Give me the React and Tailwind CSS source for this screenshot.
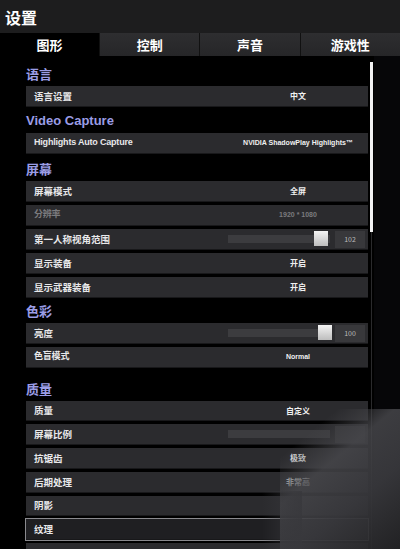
const FONT = { fontFamily: '"Noto Sans CJK SC", "Liberation Sans", sans-serif' };
const LATIN = { fontFamily: '"Liberation Sans", "Noto Sans CJK SC", sans-serif' };

const tabs = ["图形", "控制", "声音", "游戏性"];

function Heading({ children, className = "", latin }) {
  return (
    <div
      className={`flex items-end text-[13px] font-bold text-[#9b9de6] ${className}`}
      style={latin ? LATIN : undefined}
    >
      {children}
    </div>
  );
}

function Row({ label, value, dim, slider, active, latin, h = "h-[21px]" }) {
  return (
    <div
      className={`flex ${h} items-center border-b border-[#18181a] ${
        active ? "bg-[#1f1f22] outline outline-1 outline-[#8a8a8e]" : "bg-[#2b2b2e]"
      }`}
    >
      <div
        className={`w-[202px] pl-[8px] font-bold ${latin ? "text-[9px] tracking-[-0.2px]" : "text-[9.5px]"} ${
          dim ? "text-[#7b7b7e]" : "text-[#e8e8ea]"
        }`}
        style={latin ? LATIN : undefined}
      >
        {label}
      </div>
      {slider ? (
        <div className="flex flex-1 items-center pr-[3px]">
          <div className="relative h-[8px] flex-1 bg-[#3c3c3f]">
            <div
              className="absolute top-[-4px] h-[15px] w-[14px] bg-gradient-to-b from-[#f4f4f4] to-[#bdbdbd]"
              style={{ left: slider.pos }}
            />
          </div>
          <div className="ml-[5px] flex h-[17px] w-[30px] items-center justify-center bg-[#38383b] text-[7px] text-[#bbb]">
            {slider.value}
          </div>
        </div>
      ) : (
        <div
          className={`flex-1 text-center font-bold ${latin ? "text-[7px]" : "text-[8px]"} ${
            dim ? "text-[#7b7b7e]" : "text-[#f0f0f0]"
          }`}
          style={latin ? LATIN : undefined}
        >
          {value}
        </div>
      )}
    </div>
  );
}

export default function App() {
  return (
    <div className="relative h-[549px] w-[400px] overflow-hidden bg-black" style={FONT}>
      {/* header */}
      <div className="flex h-[33px] items-center bg-[#1d1d1e] pl-[5px] text-[16px] font-bold text-white">
        设置
      </div>

      {/* tabs */}
      <div className="flex h-[23px] bg-[#1d1d1e]">
        {tabs.map((t, i) => (
          <div
            key={t}
            className={`flex items-center justify-center text-[13px] font-bold text-white ${
              i === 0
                ? "w-[99px] bg-black"
                : "flex-1 border-l border-[#111] bg-gradient-to-b from-[#2e2e30] to-[#262628]"
            }`}
          >
            {t}
          </div>
        ))}
      </div>

      {/* content */}
      <div className="flex">
        <div className="w-[26px]" />
        <div className="flex w-[342px] flex-col gap-[3px]">
          <Heading className="h-[27px]">语言</Heading>
          <Row label="语言设置" value="中文" />
          <Heading className="h-[20px] text-[12px]" latin>Video Capture</Heading>
          <Row label="Highlights Auto Capture" value="NVIDIA ShadowPlay Highlights™" latin />
          <Heading className="h-[21px]">屏幕</Heading>
          <Row label="屏幕模式" value="全屏" />
          <Row label="分辨率" value="1920 * 1080" dim latin />
          <Row label="第一人称视角范围" slider={{ pos: 86, value: "102" }} />
          <Row label="显示装备" value="开启" />
          <Row label="显示武器装备" value="开启" />
          <Heading className="h-[19px]">色彩</Heading>
          <Row label="亮度" slider={{ pos: 90, value: "100" }} />
          <Row label="色盲模式" value="Normal" latin />
          <Heading className="h-[27px]">质量</Heading>
          <Row label="质量" value="自定义" h="h-[20px]" />
          <Row label="屏幕比例" slider={{ pos: 200, value: "" }} h="h-[21px]" />
          <Row label="抗锯齿" value="极致" h="h-[21px]" />
          <Row label="后期处理" value="非常高" h="h-[21px]" />
          <Row label="阴影" value="" h="h-[20px]" />
          <Row label="纹理" value="" active h="h-[21px]" />
          <Row label="" value="" h="h-[21px]" />
        </div>
        <div className="ml-[2px] flex w-[4px] flex-col pt-[6px]">
          <div className="h-[170px] w-[3px] bg-[#f2f2f2]" />
          <div className="ml-[1px] h-[400px] w-[1px] bg-[#2a2a2c]" />
        </div>
        <div className="flex-1 bg-[#060608]" />
      </div>

      {/* smear over the bottom right corner */}
      <div
        className="pointer-events-none absolute right-0 bottom-0 h-[140px] w-[120px]"
        style={{
          background:
            "linear-gradient(140deg, rgba(60,60,64,0) 20%, rgba(70,70,74,0.85) 40%, rgba(56,56,60,0.95) 65%, rgba(36,36,38,0.92) 100%)",
        }}
      />
      <div
        className="pointer-events-none absolute bottom-0 left-[262px] h-[58px] w-[40px]"
        style={{ background: "linear-gradient(90deg, rgba(56,56,60,0), rgba(56,56,60,0.8))" }}
      />
    </div>
  );
}
